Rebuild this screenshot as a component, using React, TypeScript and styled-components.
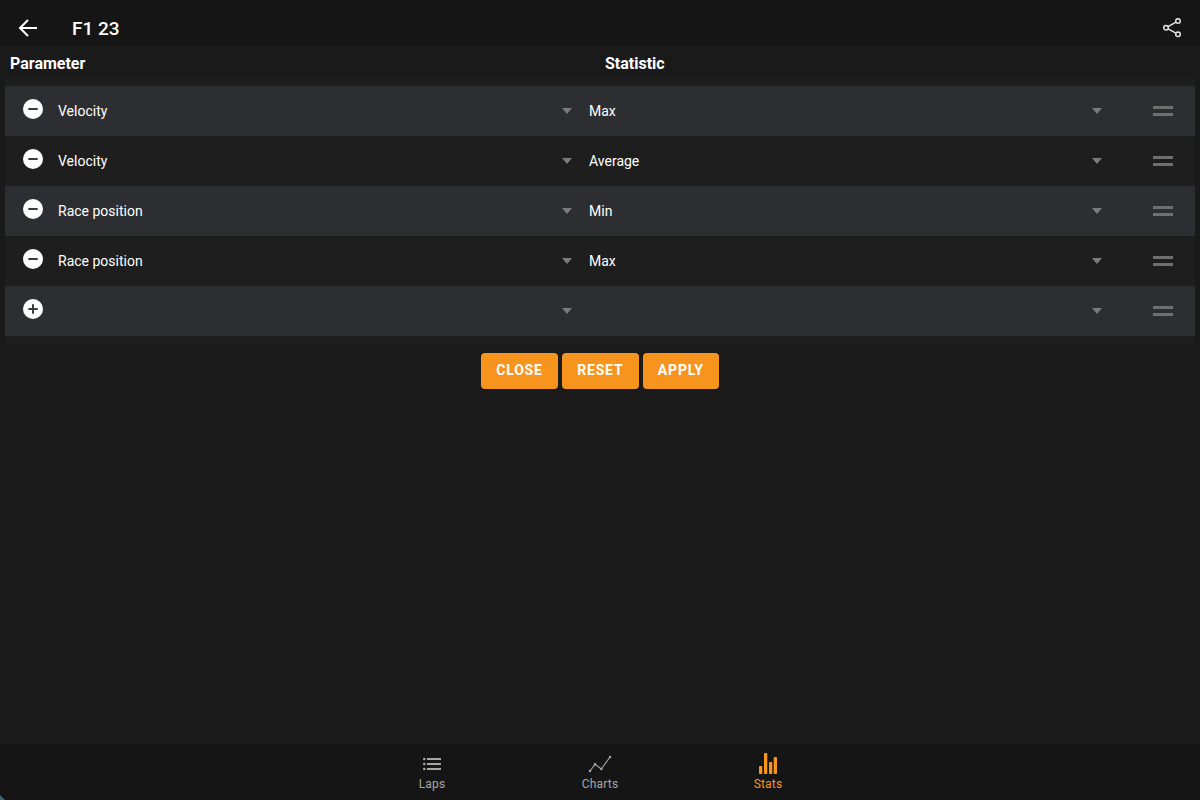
import React from "react";
import styled, { createGlobalStyle } from "styled-components";

const Global = createGlobalStyle`
  html, body { margin: 0; padding: 0; height: 100%; background: #1a1a1a; }
  #root { height: 100%; }
  * { box-sizing: border-box; }
`;

const Page = styled.div`
  position: relative;
  width: 1200px;
  height: 800px;
  display: flex;
  flex-direction: column;
  background: #1a1a1a;
  color: #fff;
  font-family: Roboto, "Liberation Sans", sans-serif;
  overflow: hidden;
`;

const CornerGlint = styled.svg`
  position: absolute;
  left: 0;
  bottom: 0;
  width: 5px;
  height: 5px;
`;

const AppBar = styled.header`
  height: 46px;
  flex: none;
  display: flex;
  align-items: center;
  background: #151515;
  padding: 10px 18px 0;
`;

const BackButton = styled.svg`
  width: 20px;
  height: 20px;
  flex: none;
`;

const Title = styled.h1`
  margin: 2px 0 0 34px;
  font-size: 19px;
  font-weight: 500;
  line-height: 24px;
  flex: 1;
`;

const ShareIcon = styled.svg`
  width: 20px;
  height: 20px;
  flex: none;
`;

const ColumnHeader = styled.div`
  height: 32px;
  flex: none;
  display: grid;
  grid-template-columns: 595px 1fr;
  align-items: center;
  padding: 3px 10px 0;
  font-size: 16px;
  font-weight: 700;
`;

const HeaderCell = styled.div`
  line-height: 30px;
`;

const List = styled.div`
  margin: 0 5px;
  padding: 8px 0;
  background: #1e1e1e;
`;

const Row = styled.div<{ $shaded: boolean }>`
  height: 50px;
  display: grid;
  grid-template-columns: 53px 530px 530px 1fr;
  align-items: center;
  background: ${(p) => (p.$shaded ? "#2d2e32" : "#1e1e1e")};
`;

const RoundAction = styled.svg`
  width: 20px;
  height: 20px;
  margin: -4px 0 0 18px;
  display: block;
`;

const Select = styled.div`
  height: 100%;
  display: flex;
  align-items: center;
  padding-right: 16.5px;
  font-size: 14px;
  font-weight: 400;
`;

const Statistic = styled(Select)`
  padding-left: 1px;
`;

const Caret = styled.span`
  width: 0;
  height: 0;
  flex: none;
  margin-left: auto;
  border-left: 5px solid transparent;
  border-right: 5px solid transparent;
  border-top: 6px solid #7b7b7b;
`;

const Handle = styled.span`
  display: block;
  justify-self: end;
  width: 20px;
  height: 10px;
  margin-right: 22px;
  border-top: 3px solid #6f6f6f;
  border-bottom: 3px solid #6f6f6f;
`;

const Actions = styled.div`
  display: flex;
  justify-content: center;
  gap: 4px;
  margin-top: 9px;
`;

const Button = styled.button`
  height: 36px;
  padding: 0 15.25px 2px;
  border: 0;
  border-radius: 4px;
  background: #f7941d;
  color: #fff;
  font-family: inherit;
  font-size: 14px;
  font-weight: 700;
  letter-spacing: 0.8px;
`;

const Spacer = styled.div`
  flex: 1;
`;

const BottomNav = styled.nav`
  height: 56px;
  flex: none;
  background: #151515;
  display: flex;
  justify-content: center;
`;

const NavItem = styled.div<{ $active?: boolean }>`
  width: 168px;
  display: flex;
  flex-direction: column;
  align-items: center;
  padding-top: 9px;
  color: ${(p) => (p.$active ? "#f7941d" : "#a6a6a6")};
  font-size: 12px;
  line-height: 14px;
  letter-spacing: 0.2px;
`;

const NavIcon = styled.svg`
  width: 24px;
  height: 24px;
  display: block;
`;

const rows = [
  { parameter: "Velocity", statistic: "Max", add: false },
  { parameter: "Velocity", statistic: "Average", add: false },
  { parameter: "Race position", statistic: "Min", add: false },
  { parameter: "Race position", statistic: "Max", add: false },
  { parameter: "", statistic: "", add: true },
];

export default function App() {
  return (
    <Page>
      <Global />
      <AppBar>
        <BackButton viewBox="0 0 20 20" fill="none" stroke="#fff" strokeWidth="2">
          <path d="M19 10H2M10 2l-8 8 8 8" />
        </BackButton>
        <Title>F1 23</Title>
        <ShareIcon viewBox="0 0 20 20" fill="none" stroke="#e4e4e4" strokeWidth="1.5">
          <circle cx="16" cy="3" r="2.3" />
          <circle cx="4" cy="9.700" r="2.300" />
          <circle cx="16" cy="16.300" r="2.300" />
          <path d="M6 8.600l8-4.500M6 10.800l8 4.400" />
        </ShareIcon>
      </AppBar>
      <ColumnHeader>
        <HeaderCell>Parameter</HeaderCell>
        <HeaderCell>Statistic</HeaderCell>
      </ColumnHeader>
      <List>
        {rows.map((r, i) => (
          <Row key={i} $shaded={i % 2 === 0}>
            <RoundAction viewBox="0 0 20 20">
              <circle cx="10" cy="10" r="10" fill="#fff" />
              <path
                d={r.add ? "M5.300 10h9.400M10 5.300v9.400" : "M5.300 10h9.400"}
                stroke="#3a3b3f"
                strokeWidth="2"
                fill="none"
              />
            </RoundAction>
            <Select>
              {r.parameter}
              <Caret />
            </Select>
            <Statistic>
              {r.statistic}
              <Caret />
            </Statistic>
            <Handle />
          </Row>
        ))}
      </List>
      <Actions>
        <Button>CLOSE</Button>
        <Button>RESET</Button>
        <Button>APPLY</Button>
      </Actions>
      <Spacer />
      <BottomNav>
        <NavItem>
          <NavIcon viewBox="0 0 24 24" fill="currentColor">
            <circle cx="4.300" cy="6" r="1.300" />
            <circle cx="4.300" cy="11" r="1.300" />
            <circle cx="4.300" cy="16" r="1.300" />
            <rect x="7" y="5" width="14" height="2" />
            <rect x="7" y="10" width="14" height="2" />
            <rect x="7" y="15" width="14" height="2" />
          </NavIcon>
          Laps
        </NavItem>
        <NavItem>
          <NavIcon viewBox="0 0 24 24" fill="currentColor" stroke="currentColor" strokeWidth="1.100">
            <path d="M2 18l5-6.700 6.300 4.700L22 4" fill="none" />
            <circle cx="2" cy="18" r="0.700" />
            <circle cx="7" cy="11.300" r="0.700" />
            <circle cx="13.300" cy="16" r="0.700" />
            <circle cx="22" cy="4" r="0.700" />
          </NavIcon>
          Charts
        </NavItem>
        <NavItem $active>
          <NavIcon viewBox="0 0 24 24" fill="currentColor">
            <rect x="3" y="13" width="3.300" height="8" rx="0.800" />
            <rect x="8" y="0" width="3.300" height="21" rx="0.800" />
            <rect x="13" y="9" width="3.300" height="12" rx="0.800" />
            <rect x="17.700" y="4" width="3.300" height="17" rx="0.800" />
          </NavIcon>
          Stats
        </NavItem>
      </BottomNav>
      <CornerGlint viewBox="0 0 5 5">
        <path d="M0 0L5 5H0Z" fill="#3d6672" />
      </CornerGlint>
    </Page>
  );
}
